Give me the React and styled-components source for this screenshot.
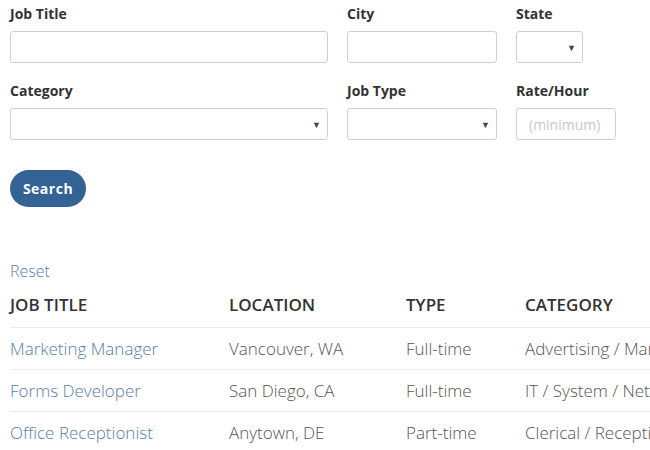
import React from "react";
import styled, { createGlobalStyle } from "styled-components";

const Global = createGlobalStyle`
  html, body { margin: 0; padding: 0; background: #fff; overflow: hidden; }
  body { font-family: "Open Sans", "Liberation Sans", sans-serif; }
`;

const Page = styled.div`
  padding: 5px 0 0 10px;
  width: 640px;
  overflow: hidden;
`;

const FormRow = styled.div`
  display: flex;
  gap: 19px;
  margin-bottom: ${(p) => p.$mb || 19}px;
`;

const Field = styled.div`
  display: flex;
  flex-direction: column;
  width: ${(p) => p.$w}px;
`;

const Label = styled.label`
  font-size: 14px;
  font-weight: 700;
  line-height: 18px;
  color: #333;
  margin-bottom: 8px;
`;

const TextInput = styled.input`
  box-sizing: border-box;
  height: 32px;
  width: 100%;
  border: 1px solid #cfcfcf;
  border-radius: 3px;
  padding: 0 12px;
  font-family: "Open Sans", sans-serif;
  font-size: 14px;
  background: #fff;
  &::placeholder { color: #c8c8c8; }
`;

const SelectBox = styled.div`
  box-sizing: border-box;
  height: 32px;
  width: 100%;
  border: 1px solid #cfcfcf;
  border-radius: 3px;
  display: flex;
  align-items: center;
  justify-content: flex-end;
  padding-right: 6px;
  font-size: 9px;
  color: #444;
`;

const Button = styled.button`
  box-sizing: border-box;
  width: 76px;
  height: 37px;
  border: none;
  border-radius: 19px;
  background: #336294;
  color: #fff;
  font-family: "Open Sans", sans-serif;
  font-size: 14px;
  font-weight: 700;
  letter-spacing: 0.5px;
  padding: 0;
`;

const ResetLink = styled.a`
  display: block;
  margin-top: 52px;
  font-size: 16px;
  font-weight: 300;
  line-height: 24px;
  color: #5a7ea5;
  text-decoration: none;
`;

const Table = styled.table`
  border-collapse: collapse;
  table-layout: fixed;
  width: 780px;
`;

const Th = styled.th`
  text-align: left;
  font-size: 17px;
  font-weight: 600;
  color: #333;
  line-height: 24px;
  padding: 10px 0 10px;
  width: ${(p) => p.$w}px;
`;

const Td = styled.td`
  font-size: 17px;
  font-weight: 300;
  line-height: 24px;
  color: ${(p) => (p.$link ? "#5a7ea5" : "#555")};
  padding: 9px 0 8px;
  border-top: 1px solid #ececec;
  white-space: nowrap;
  overflow: hidden;
`;

const rows = [
  ["Marketing Manager", "Vancouver, WA", "Full-time", "Advertising / Marketing"],
  ["Forms Developer", "San Diego, CA", "Full-time", "IT / System / Network"],
  ["Office Receptionist", "Anytown, DE", "Part-time", "Clerical / Receptionist"],
];

const Arrow = () => <span>▼</span>;

export default function App() {
  return (
    <Page>
      <Global />
      <FormRow>
        <Field $w={318}>
          <Label>Job Title</Label>
          <TextInput />
        </Field>
        <Field $w={150}>
          <Label>City</Label>
          <TextInput />
        </Field>
        <Field $w={67}>
          <Label>State</Label>
          <SelectBox><Arrow /></SelectBox>
        </Field>
      </FormRow>
      <FormRow $mb={30}>
        <Field $w={318}>
          <Label>Category</Label>
          <SelectBox><Arrow /></SelectBox>
        </Field>
        <Field $w={150}>
          <Label>Job Type</Label>
          <SelectBox><Arrow /></SelectBox>
        </Field>
        <Field $w={100}>
          <Label>Rate/Hour</Label>
          <TextInput placeholder="(minimum)" />
        </Field>
      </FormRow>
      <Button>Search</Button>
      <ResetLink href="#">Reset</ResetLink>
      <Table>
        <thead>
          <tr>
            <Th $w={219}>JOB TITLE</Th>
            <Th $w={177}>LOCATION</Th>
            <Th $w={119}>TYPE</Th>
            <Th $w={265}>CATEGORY</Th>
          </tr>
        </thead>
        <tbody>
          {rows.map((r) => (
            <tr key={r[0]}>
              <Td $link>{r[0]}</Td>
              <Td>{r[1]}</Td>
              <Td>{r[2]}</Td>
              <Td>{r[3]}</Td>
            </tr>
          ))}
        </tbody>
      </Table>
    </Page>
  );
}
